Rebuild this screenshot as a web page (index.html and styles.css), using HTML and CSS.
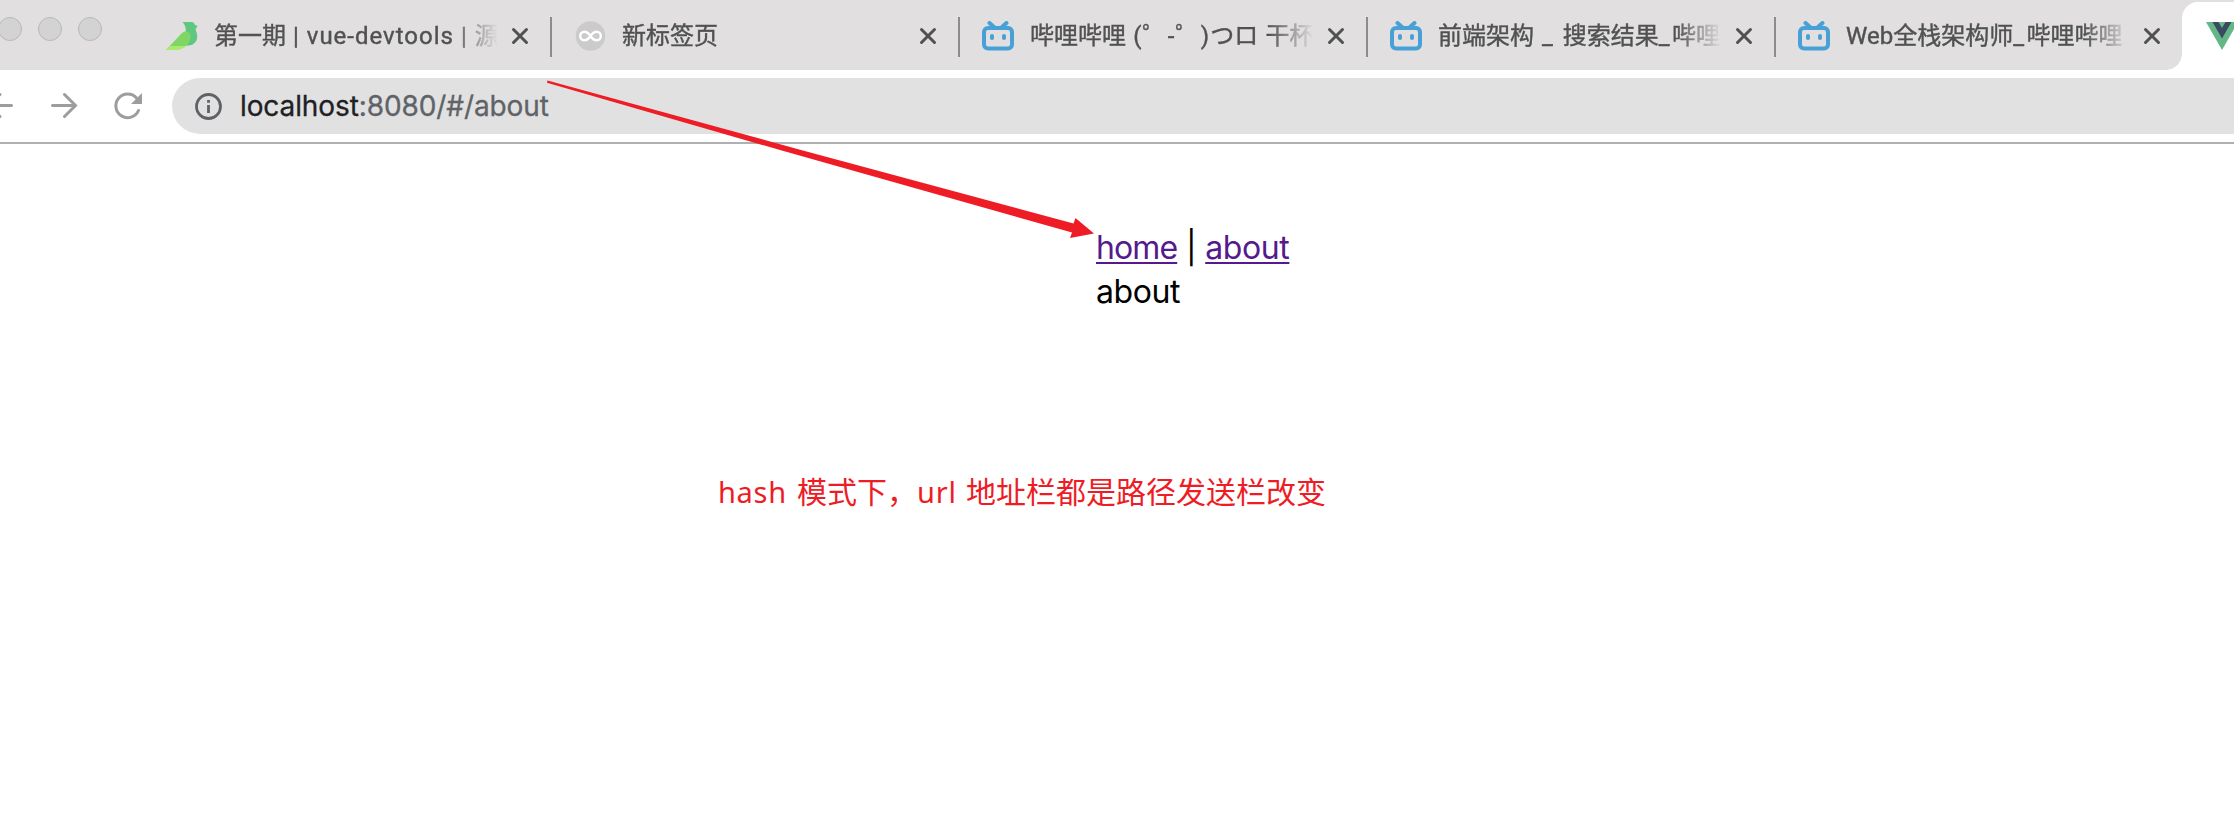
FILE: index.html
```html
<!DOCTYPE html>
<html lang="zh-CN">
<head>
<meta charset="utf-8">
<title>about</title>
<link rel="stylesheet" href="styles.css">
</head>
<body>
<svg class="defs" width="0" height="0" aria-hidden="true">
  <symbol id="close" viewBox="0 0 18 18"><path d="M2.500 2.500 15.500 15.500M15.500 2.500 2.500 15.500" fill="none" stroke="#505152" stroke-width="3" stroke-linecap="round"/></symbol>
  <symbol id="tv" viewBox="0 0 32 30"><rect x="2" y="7" width="28" height="20.5" rx="4" fill="none" stroke="#47a1d6" stroke-width="4"/><path d="M7.5 2 12 6M24.500 2 20 6" stroke="#47a1d6" stroke-width="4" stroke-linecap="round"/><rect x="8" y="13" width="4" height="6" rx="2" fill="#47a1d6"/><rect x="20" y="13" width="4" height="6" rx="2" fill="#47a1d6"/></symbol>
</svg>
<header class="browser">
  <div class="tabstrip">
    <div class="lights"><i></i><i></i><i></i></div>
    <div class="tab">
      <svg class="favicon" viewBox="0 0 32 30"><path d="M16.500 1H26q2.500.5 3 3l2.500 1-2 3.500c2 4.500 2.500 9 0 12.500-2 2.500-4.500 3.500-7 3.500H10l9.500-12c1-5-.5-9-3-11.500z" fill="#5fc77f"/><path d="M15.500 12.500c4-4 9-1.500 9 3.500C24.500 22 18 28.500 9 29H0z" fill="#7fd664"/><path d="M0 29 4 25H20.500C17.500 27.500 13 29 9 29z" fill="#a9ea6d"/></svg>
      <span class="title">第一期<span class="t1"> | vue-devtools | </span>源</span>
      <svg class="close"><use href="#close"/></svg>
    </div>
    <div class="tab">
      <svg class="favicon" viewBox="0 0 32 30"><circle cx="16.500" cy="15" r="14.700" fill="#cbcbcb"/><path d="M16.500 15c-2-3-4-4.300-6-4.300a4.300 4.300 0 0 0 0 8.600c2 0 4-1.300 6-4.300s4-4.300 6-4.300a4.300 4.300 0 0 1 0 8.600c-2 0-4-1.300-6-4.300z" fill="none" stroke="#fff" stroke-width="2.400"/></svg>
      <span class="title">新标签页</span>
      <svg class="close"><use href="#close"/></svg>
    </div>
    <div class="tab">
      <svg class="favicon"><use href="#tv"/></svg>
      <span class="title">哔哩哔哩<span class="t3"> (゜-゜)</span>つロ<span class="t3"> </span>干杯</span>
      <svg class="close"><use href="#close"/></svg>
    </div>
    <div class="tab">
      <svg class="favicon"><use href="#tv"/></svg>
      <span class="title">前端架构<span class="t4"> _ </span>搜索结果<span class="t5">_</span>哔哩</span>
      <svg class="close"><use href="#close"/></svg>
    </div>
    <div class="tab last">
      <svg class="favicon"><use href="#tv"/></svg>
      <span class="title">Web全栈架构师<span class="t5">_</span>哔哩哔哩</span>
      <svg class="close"><use href="#close"/></svg>
    </div>
    <div class="tab-active">
      <svg class="vue" viewBox="0 0 32 28"><path d="M0 0h32L16 28z" fill="#64b687"/><path d="M6.500 0h6L16 6l3.500-6h6L16 16.500z" fill="#3a4a60"/></svg>
    </div>
  </div>
  <div class="toolbar">
    <svg class="nav" viewBox="0 0 172 72" fill="none" stroke="#9d9d9d" stroke-width="3" stroke-linecap="round"><path d="M-12 35.500H11.500M0 24.500-12 35.500 0 46.500M52.500 35.500H75M64.500 24.500 75.500 35.500 64.500 46.500"/><path d="M138.500 40.500A11.800 11.800 0 1 1 136.500 28"/><path d="M142 23v11h-11z" fill="#9d9d9d" stroke="none"/></svg>
    <div class="omnibox">
      <svg class="info" viewBox="0 0 28 28"><circle cx="14.500" cy="14.500" r="12" fill="none" stroke="#5f6368" stroke-width="2.800"/><path d="M13.100 13h2.800v8h-2.800zM13.100 8h2.800v2.800h-2.800z" fill="#5f6368"/></svg>
      <span class="url"><b>localhost</b>:8080/#/about</span>
    </div>
  </div>
</header>
<main class="page">
  <nav class="links"><a href="#/">home</a><span class="bar">|</span><a class="about" href="#/about">about</a></nav>
  <div class="view about">about</div>
  <p class="note"><span class="hash">hash</span><span class="zh1">模式下，</span><span class="u">url</span><span>地址栏都是路径发送栏改变</span></p>
</main>
<svg class="arrow" viewBox="0 0 560 170"><path d="M7.500.5 261 70 533.500 143.500 535.500 138 554 153.500 530 158 532 152.500 240 70 7 2.700z" fill="#ee1c25"/></svg>
</body>
</html>
```
FILE: styles.css
```css
* { box-sizing: border-box; }
body { margin: 0; width: 2234px; height: 820px; overflow: hidden; position: relative; background: #fff; font-family: Inter, "Noto Sans CJK SC", sans-serif; }
.defs { position: absolute; }
.tabstrip { display: flex; height: 70px; background: #e1dfe0; }
.lights { display: flex; gap: 16px; width: 144px; flex: none; padding-top: 17px; }
.lights i { width: 24px; height: 24px; flex: none; border-radius: 50%; background: #d4d3d3; border: 1px solid #b9b8b8; }
.lights i:first-child { margin-left: -2px; }
.tab { flex: none; display: flex; align-items: center; width: 408px; height: 72px; padding-left: 22px; }
.tab::after { content: ""; width: 2px; height: 40px; margin: 2px 0 0 auto; background: #8d8c8c; }
.tab.last { width: 406px; }
.tab.last::after { background: none; }
.favicon { width: 32px; height: 30px; flex: none; }
.title { width: 292px; height: 36px; margin-left: 16px; flex: none; overflow: hidden; white-space: pre; font: 24px/36px Roboto, "Noto Sans CJK SC", sans-serif; color: #505152; -webkit-text-stroke: .4px #505152; -webkit-mask: linear-gradient(90deg, #000 238px, transparent 284px); mask: linear-gradient(90deg, #000 238px, transparent 284px); }
.t1 { letter-spacing: 1px; }
.t3 { letter-spacing: 1.2px; }
.t4 { letter-spacing: 2px; }
.t5 { letter-spacing: 2.5px; }
.close { width: 18px; height: 18px; margin-left: 5px; flex: none; }
.tab-active { position: relative; flex: 1; margin-top: 2px; padding: 20px 0 0 24px; background: #fff; border-radius: 16px 0 0 0; }
.tab-active::before { content: ""; position: absolute; left: -16px; bottom: 0; width: 16px; height: 16px; background: radial-gradient(circle at 0 0, transparent 15.5px, #fff 16px); }
.vue { display: block; width: 32px; height: 28px; }
.toolbar { display: flex; height: 74px; border-bottom: 2px solid #b0b0b0; }
.nav { width: 172px; height: 72px; flex: none; }
.omnibox { flex: 1; display: flex; align-items: center; height: 56px; margin-top: 8px; padding-left: 22px; background: #e1e1e1; border-radius: 28px 0 0 28px; }
.info { width: 28px; height: 28px; }
.url { margin-left: 18px; font: 28px/40px Inter, sans-serif; letter-spacing: -.1px; color: #5f6368; -webkit-text-stroke: .3px currentColor; }
.url b { font-weight: 400; color: #202124; }
.page { padding: 82px 0 0 1096px; font-size: 32px; line-height: 44px; color: #000; }
.links { display: flex; height: 44px; }
.links a { color: #551a8b; letter-spacing: -.9px; text-decoration-thickness: 2px; text-underline-offset: 3px; }
.links a.about, .view.about { letter-spacing: -.4px; }
.bar { width: 28px; text-align: center; }
.note { display: flex; margin: 156px 0 0 -378px; font: 30px/44px "Noto Sans", "Noto Sans CJK SC", sans-serif; color: #ee1c25; white-space: nowrap; }
.hash { width: 79px; font-size: 29px; letter-spacing: .7px; }
.zh1 { width: 120px; }
.u { width: 49px; font-size: 29px; letter-spacing: .8px; }
.arrow { position: absolute; left: 540px; top: 80px; width: 560px; height: 170px; }
```
